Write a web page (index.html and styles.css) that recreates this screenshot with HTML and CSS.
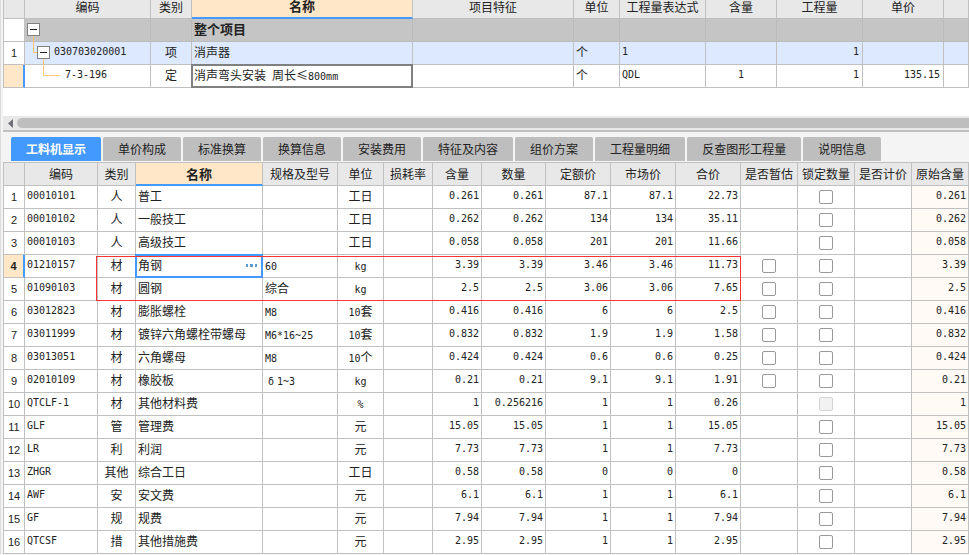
FILE: index.html
```html
<!DOCTYPE html>
<html lang="zh-CN">
<head>
<meta charset="utf-8">
<title>工料机显示</title>
<link rel="stylesheet" href="styles.css">
</head>
<body>
<main class="app">
<section class="bill">
<table class="grid bill-grid">
<colgroup><col class="w21"><col class="w126"><col class="w41"><col class="w221"><col class="w161"><col class="w46"><col class="w86"><col class="w71"><col class="w86"><col class="w81"><col></colgroup>
<thead><tr><th></th><th>编码</th><th>类别</th><th class="sorted">名称</th><th>项目特征</th><th>单位</th><th>工程量表达式</th><th>含量</th><th>工程量</th><th>单价</th><th></th></tr></thead>
<tbody>
<tr class="project"><th></th><td><div class="tree"><button class="fold" aria-label="折叠整个项目"></button></div></td><td></td><td class="title">整个项目</td><td></td><td></td><td></td><td></td><td></td><td></td><td></td></tr>
<tr class="item"><th>1</th><td><div class="tree level1"><i class="elbow"></i><button class="fold" aria-label="折叠消声器"></button><span class="n">030703020001</span></div></td><td class="c">项</td><td>消声器</td><td></td><td>个</td><td class="n">1</td><td></td><td class="r n">1</td><td></td><td></td></tr>
<tr><th class="current"></th><td><div class="tree level2"><i class="elbow"></i><span class="n">7-3-196</span></div></td><td class="c">定</td><td class="focus gray">消声弯头安装<span class="n"> </span>周长<span class="wide">≤</span><span class="n">800mm</span></td><td></td><td>个</td><td class="n">QDL</td><td class="c n">1</td><td class="r n">1</td><td class="r n">135.15</td><td></td></tr>
</tbody>
</table>
</section>
<div class="scrollbar"><svg class="arrow" width="5" height="9" viewBox="0 0 5 9"><path d="M5 0v9L0 4.5z" fill="#70707a"/></svg><div class="thumb"></div></div>
<nav class="tabs" role="tablist">
<button class="tab active" role="tab" aria-selected="true">工料机显示</button>
<button class="tab" role="tab">单价构成</button>
<button class="tab" role="tab">标准换算</button>
<button class="tab" role="tab">换算信息</button>
<button class="tab" role="tab">安装费用</button>
<button class="tab" role="tab">特征及内容</button>
<button class="tab" role="tab">组价方案</button>
<button class="tab" role="tab">工程量明细</button>
<button class="tab" role="tab">反查图形工程量</button>
<button class="tab" role="tab">说明信息</button>
</nav>
<section class="detail">
<table class="grid detail-grid">
<colgroup><col class="w21"><col class="w73"><col class="w38"><col class="w127"><col class="w75"><col class="w46"><col class="w49"><col class="w49"><col class="w64"><col class="w65"><col class="w65"><col class="w65"><col class="w57"><col class="w57"><col class="w57"><col class="w57"></colgroup>
<thead><tr><th></th><th>编码</th><th>类别</th><th class="sorted">名称</th><th>规格及型号</th><th>单位</th><th>损耗率</th><th>含量</th><th>数量</th><th>定额价</th><th>市场价</th><th>合价</th><th>是否暂估</th><th>锁定数量</th><th>是否计价</th><th>原始含量</th></tr></thead>
<tbody>
<tr><th>1</th><td>00010101</td><td>人</td><td>普工</td><td></td><td>工日</td><td></td><td>0.261</td><td>0.261</td><td>87.1</td><td>87.1</td><td>22.73</td><td></td><td><input type="checkbox" aria-label="锁定数量 1"></td><td></td><td>0.261</td></tr>
<tr><th>2</th><td>00010102</td><td>人</td><td>一般技工</td><td></td><td>工日</td><td></td><td>0.262</td><td>0.262</td><td>134</td><td>134</td><td>35.11</td><td></td><td><input type="checkbox" aria-label="锁定数量 2"></td><td></td><td>0.262</td></tr>
<tr><th>3</th><td>00010103</td><td>人</td><td>高级技工</td><td></td><td>工日</td><td></td><td>0.058</td><td>0.058</td><td>201</td><td>201</td><td>11.66</td><td></td><td><input type="checkbox" aria-label="锁定数量 3"></td><td></td><td>0.058</td></tr>
<tr><th class="current">4</th><td>01210157</td><td>材</td><td class="focus blue"><div class="editor">角钢<button class="more" aria-label="更多"><svg width="11" height="3" viewBox="0 0 11 3"><path d="M0 0h2v3H0zM4 0h3v3H4zM9 0h2v3H9z" fill="#5b9bd0"/></svg></button></div></td><td><span class="n">60</span></td><td><span class="n">kg</span></td><td></td><td>3.39</td><td>3.39</td><td>3.46</td><td>3.46</td><td>11.73</td><td><input type="checkbox" aria-label="是否暂估 4"></td><td><input type="checkbox" aria-label="锁定数量 4"></td><td></td><td>3.39</td></tr>
<tr><th>5</th><td>01090103</td><td>材</td><td>圆钢</td><td>综合</td><td><span class="n">kg</span></td><td></td><td>2.5</td><td>2.5</td><td>3.06</td><td>3.06</td><td>7.65</td><td><input type="checkbox" aria-label="是否暂估 5"></td><td><input type="checkbox" aria-label="锁定数量 5"></td><td></td><td>2.5</td></tr>
<tr><th>6</th><td>03012823</td><td>材</td><td>膨胀螺栓</td><td><span class="n">M8</span></td><td><span class="n">10</span>套</td><td></td><td>0.416</td><td>0.416</td><td>6</td><td>6</td><td>2.5</td><td><input type="checkbox" aria-label="是否暂估 6"></td><td><input type="checkbox" aria-label="锁定数量 6"></td><td></td><td>0.416</td></tr>
<tr><th>7</th><td>03011999</td><td>材</td><td>镀锌六角螺栓带螺母</td><td><span class="n">M6*16~25</span></td><td><span class="n">10</span>套</td><td></td><td>0.832</td><td>0.832</td><td>1.9</td><td>1.9</td><td>1.58</td><td><input type="checkbox" aria-label="是否暂估 7"></td><td><input type="checkbox" aria-label="锁定数量 7"></td><td></td><td>0.832</td></tr>
<tr><th>8</th><td>03013051</td><td>材</td><td>六角螺母</td><td><span class="n">M8</span></td><td><span class="n">10</span>个</td><td></td><td>0.424</td><td>0.424</td><td>0.6</td><td>0.6</td><td>0.25</td><td><input type="checkbox" aria-label="是否暂估 8"></td><td><input type="checkbox" aria-label="锁定数量 8"></td><td></td><td>0.424</td></tr>
<tr><th>9</th><td>02010109</td><td>材</td><td>橡胶板</td><td><span class="wide n">δ</span><span class="n">1~3</span></td><td><span class="n">kg</span></td><td></td><td>0.21</td><td>0.21</td><td>9.1</td><td>9.1</td><td>1.91</td><td><input type="checkbox" aria-label="是否暂估 9"></td><td><input type="checkbox" aria-label="锁定数量 9"></td><td></td><td>0.21</td></tr>
<tr><th>10</th><td>QTCLF-1</td><td>材</td><td>其他材料费</td><td></td><td><span class="n">%</span></td><td></td><td>1</td><td>0.256216</td><td>1</td><td>1</td><td>0.26</td><td></td><td><input type="checkbox" aria-label="锁定数量 10" disabled></td><td></td><td>1</td></tr>
<tr><th>11</th><td>GLF</td><td>管</td><td>管理费</td><td></td><td>元</td><td></td><td>15.05</td><td>15.05</td><td>1</td><td>1</td><td>15.05</td><td></td><td><input type="checkbox" aria-label="锁定数量 11"></td><td></td><td>15.05</td></tr>
<tr><th>12</th><td>LR</td><td>利</td><td>利润</td><td></td><td>元</td><td></td><td>7.73</td><td>7.73</td><td>1</td><td>1</td><td>7.73</td><td></td><td><input type="checkbox" aria-label="锁定数量 12"></td><td></td><td>7.73</td></tr>
<tr><th>13</th><td>ZHGR</td><td>其他</td><td>综合工日</td><td></td><td>工日</td><td></td><td>0.58</td><td>0.58</td><td>0</td><td>0</td><td>0</td><td></td><td><input type="checkbox" aria-label="锁定数量 13"></td><td></td><td>0.58</td></tr>
<tr><th>14</th><td>AWF</td><td>安</td><td>安文费</td><td></td><td>元</td><td></td><td>6.1</td><td>6.1</td><td>1</td><td>1</td><td>6.1</td><td></td><td><input type="checkbox" aria-label="锁定数量 14"></td><td></td><td>6.1</td></tr>
<tr><th>15</th><td>GF</td><td>规</td><td>规费</td><td></td><td>元</td><td></td><td>7.94</td><td>7.94</td><td>1</td><td>1</td><td>7.94</td><td></td><td><input type="checkbox" aria-label="锁定数量 15"></td><td></td><td>7.94</td></tr>
<tr><th>16</th><td>QTCSF</td><td>措</td><td>其他措施费</td><td></td><td>元</td><td></td><td>2.95</td><td>2.95</td><td>1</td><td>1</td><td>2.95</td><td></td><td><input type="checkbox" aria-label="锁定数量 16"></td><td></td><td>2.95</td></tr>
</tbody>
</table>
<div class="marker"></div>
</section>
</main>
</body>
</html>
```
FILE: styles.css
```css
* { box-sizing: border-box; }

body {
  margin: 0;
  background: #f4f4f4;
  color: #222;
  font: 12px/20px "Noto Sans CJK SC", sans-serif;
  overflow-x: hidden;
}

button {
  margin: 0;
  padding: 0;
  border: 0;
  background: none;
  font: inherit;
  color: inherit;
}

.app {
  border-left: 1px solid #dcdcdc;
  padding-left: 2px;
}

/* Shared grid */
.grid {
  width: 100%;
  table-layout: fixed;
  border-collapse: separate;
  border-spacing: 0;
  border-left: 1px solid #c0c0c0;
  background: #fff;
}

.grid th,
.grid td {
  height: 23px;
  padding: 0 2px;
  border-right: 1px solid #c0c0c0;
  border-bottom: 1px solid #c0c0c0;
  text-align: left;
  white-space: nowrap;
  vertical-align: middle;
  line-height: 18px;
}

.grid td { padding-bottom: 2px; }

.grid thead th {
  padding: 0;
  background: #e8e8e8;
  font-weight: 400;
  text-align: center;
}

.grid thead .sorted {
  background: #ffe7c8;
  border-bottom: 2px solid #4499ff;
  font-size: 13px;
  font-weight: 700;
}

.grid tbody th {
  padding: 0;
  font: 400 11px/20px "Liberation Sans", sans-serif;
  text-align: center;
}

.grid tbody .current {
  background: #ffe7c8;
  border-right: 2px solid #4499ff;
  font-weight: 700;
}

.grid .n,
.detail-grid td:nth-child(2),
.detail-grid td:nth-child(n+8) {
  font-family: "DejaVu Sans Mono", monospace;
  font-size: 10px;
}

.grid .n { white-space: pre; }
.grid span.n { line-height: 12px; }
.grid .c { text-align: center; }
.grid .r { padding-right: 3px; text-align: right; }

.wide {
  display: inline-block;
  width: 12px;
  line-height: 12px;
  text-align: center;
}

.w21 { width: 21px; }
.w38 { width: 38px; }
.w41 { width: 41px; }
.w46 { width: 46px; }
.w49 { width: 49px; }
.w57 { width: 57px; }
.w64 { width: 64px; }
.w65 { width: 65px; }
.w71 { width: 71px; }
.w73 { width: 73px; }
.w75 { width: 75px; }
.w81 { width: 81px; }
.w86 { width: 86px; }
.w126 { width: 126px; }
.w127 { width: 127px; }
.w161 { width: 161px; }
.w221 { width: 221px; }

/* Selected cell frame */
.focus { position: relative; }

.focus::after {
  content: "";
  position: absolute;
  inset: -1px;
  border: 2px solid #4499ff;
  pointer-events: none;
}

.focus.gray::after { border-color: #808080; }

.editor {
  display: flex;
  align-items: center;
  justify-content: space-between;
  padding-right: 3px;
}

.more {
  display: flex;
}

/* Bill of quantities */
.bill {
  padding-bottom: 28px;
  background: #fff;
}

.bill-grid thead th {
  height: 19px;
  padding-bottom: 5px;
  line-height: 12px;
}

.bill-grid .project td {
  background: #c5c5c5;
  border-color: #bbb;
}

.bill-grid .item td { background: #dce9ff; }

.grid .title {
  font-size: 13px;
  font-weight: 700;
}

.tree {
  position: relative;
  display: flex;
  align-items: center;
  gap: 4px;
  height: 20px;
}

.level1 { padding-left: 10px; }
.level2 { padding-left: 38px; }

.fold {
  width: 13px;
  height: 13px;
  border: 1px solid #808080;
  background: linear-gradient(#222, #222) center / 7px 1px no-repeat #fff;
}

.elbow {
  position: absolute;
  top: -6px;
  left: 6px;
  width: 4px;
  height: 17px;
  border: solid #ffc680;
  border-width: 0 0 1px 1px;
}

.level2 .elbow {
  left: 16px;
  width: 17px;
}

/* Horizontal scroll bar */
.scrollbar {
  display: flex;
  align-items: center;
  gap: 4px;
  height: 16px;
  padding: 0 0 0 5px;
  border-bottom: 2px solid #c0c0c0;
  background: #e8e8e8;
}

.thumb {
  flex: 1;
  height: 10px;
  border-radius: 5px 0 0 5px;
  background: #bebebe;
}

/* Tabs */
.tabs {
  display: flex;
  gap: 2px;
  padding: 5px 8px 1px;
}

.tab {
  flex: none;
  height: 24px;
  padding: 0 15px;
  border-radius: 2px 2px 0 0;
  background: #bebebe;
  line-height: 24px;
  white-space: nowrap;
}

.tab.active {
  background: #4499ff;
  color: #fff;
  font-weight: 700;
}

/* Resource detail */
.detail {
  position: relative;
  padding-top: 1px;
  background: #c0c0c0;
}

.detail-grid td:nth-child(3),
.detail-grid td:nth-child(6),
.detail-grid td:nth-child(13),
.detail-grid td:nth-child(14) {
  text-align: center;
}

.detail-grid td:nth-child(n+8):nth-child(-n+12),
.detail-grid td:nth-child(16) {
  text-align: right;
}

.detail-grid td:nth-child(13),
.detail-grid td:nth-child(14) {
  padding: 0;
}

.detail-grid td:nth-child(16) { background: #fffaf5; }

.grid input {
  display: block;
  appearance: none;
  width: 14px;
  height: 14px;
  margin: 0 auto;
  border: 1px solid #999;
  border-radius: 2px;
  background: #fff;
}

.grid input:disabled {
  border-color: #d4d4d4;
  background: #f2f2f2;
}

/* Highlight round the two steel rows */
.marker {
  position: absolute;
  top: 94px;
  left: 93px;
  width: 645px;
  height: 45px;
  border: 1px solid #f33;
  pointer-events: none;
}
```
